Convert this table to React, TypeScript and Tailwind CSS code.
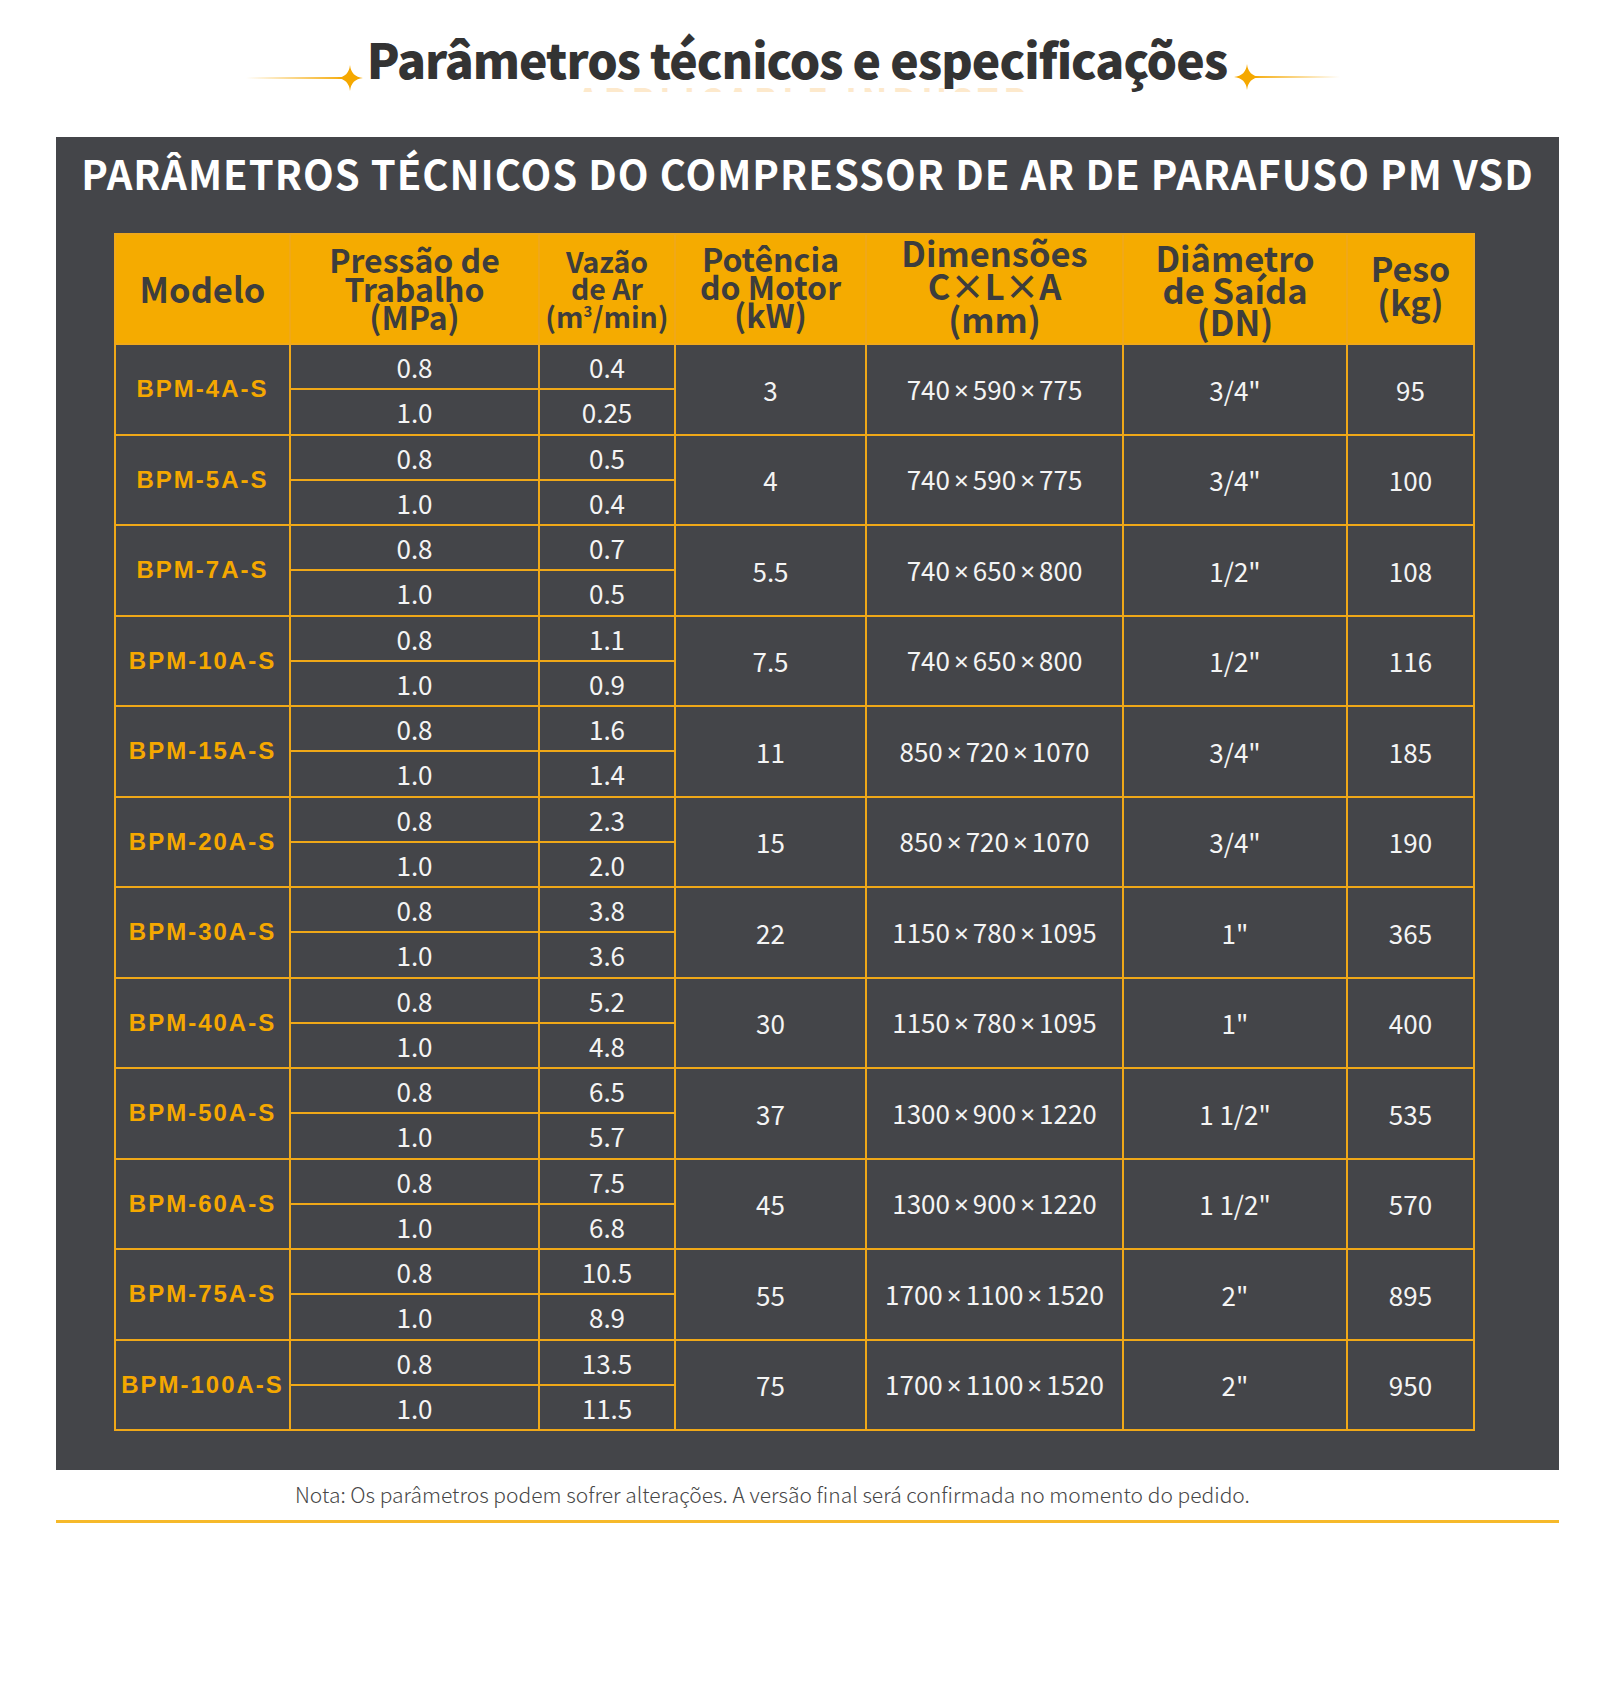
import React from "react";

const rows = [
  ["BPM-4A-S", "0.4", "0.25", "3", "740×590×775", '3/4"', "95"],
  ["BPM-5A-S", "0.5", "0.4", "4", "740×590×775", '3/4"', "100"],
  ["BPM-7A-S", "0.7", "0.5", "5.5", "740×650×800", '1/2"', "108"],
  ["BPM-10A-S", "1.1", "0.9", "7.5", "740×650×800", '1/2"', "116"],
  ["BPM-15A-S", "1.6", "1.4", "11", "850×720×1070", '3/4"', "185"],
  ["BPM-20A-S", "2.3", "2.0", "15", "850×720×1070", '3/4"', "190"],
  ["BPM-30A-S", "3.8", "3.6", "22", "1150×780×1095", '1"', "365"],
  ["BPM-40A-S", "5.2", "4.8", "30", "1150×780×1095", '1"', "400"],
  ["BPM-50A-S", "6.5", "5.7", "37", "1300×900×1220", '1 1/2"', "535"],
  ["BPM-60A-S", "7.5", "6.8", "45", "1300×900×1220", '1 1/2"', "570"],
  ["BPM-75A-S", "10.5", "8.9", "55", "1700×1100×1520", '2"', "895"],
  ["BPM-100A-S", "13.5", "11.5", "75", "1700×1100×1520", '2"', "950"],
];

const Star = () => (
  <svg width="26" height="26" viewBox="0 0 26 26" className="shrink-0">
    <path d="M13 0 Q14.2 11.8 26 13 Q14.2 14.2 13 26 Q11.8 14.2 0 13 Q11.8 11.8 13 0Z" fill="#f5a800" />
  </svg>
);

const cjk = { fontFamily: '"Noto Sans CJK SC", "Noto Sans", sans-serif' };

const Dims = ({ v }: { v: string }) => {
  const parts = v.split("×");
  return (
    <span>
      {parts.map((p, i) => (
        <React.Fragment key={i}>
          {i > 0 && (
            <span className="px-[4px]" style={{ fontFamily: '"Noto Sans", sans-serif' }}>
              ×
            </span>
          )}
          {p}
        </React.Fragment>
      ))}
    </span>
  );
};

export default function App() {
  const hdr = "bg-[#f5ab00] flex items-center justify-center text-center text-[#3d3d3d] font-bold";
  const cell = "bg-[#444549] flex items-center justify-center text-[#f4f4f4] text-[26px]";
  return (
    <div className="w-[1600px] h-[1696px] bg-white" style={cjk}>
      {/* Title */}
      <div className="h-[137px] relative">
        <div className="w-[1586px] flex justify-center items-start pt-[28px]">
          <div className="w-[103px] h-[2px] mt-[49px] bg-gradient-to-r from-[#f5a80000] to-[#f5a800]" />
          <div className="mt-[37px] -ml-[12px]"><Star /></div>
          <div className="ml-[4px] text-[48px] leading-[60px] font-black text-[#333333] tracking-[-1px] relative z-10">
            Parâmetros técnicos e especificações
          </div>
          <div className="mt-[36px] ml-[7px]"><Star /></div>
          <div className="w-[92px] h-[2px] mt-[48px] -ml-[12px] bg-gradient-to-r from-[#f5a800] to-[#f5a80000]" />
        </div>
        <div className="absolute left-[577px] top-[82px] w-[452px] h-[10px] overflow-hidden">
          <div className="text-[34px] leading-[34px] font-bold tracking-[5px] text-[#fde9cc] whitespace-nowrap">
            APPLICABLE INDUSTRIES
          </div>
        </div>
      </div>

      {/* Panel */}
      <div className="ml-[56px] w-[1503px] h-[1333px] bg-[#444549] pt-[12px]">
        <div className="h-[48px] flex items-center justify-center text-white font-bold text-[40px] leading-[48px] tracking-[1px]">
          PARÂMETROS TÉCNICOS DO COMPRESSOR DE AR DE PARAFUSO PM VSD
        </div>
        <div className="mt-[36px] ml-[58px] w-[1361px] grid bg-[#f0a818] p-[2px] gap-[2px] grid-cols-[173px_247px_134px_189px_255px_222px_125px] grid-rows-[108px_repeat(24,43.25px)]">
          <div className={hdr + " text-[34.5px]"}>Modelo</div>
          <div className={hdr + " text-[32px] leading-[28.5px] pb-[2px]"}>
            <span>Pressão de<br />Trabalho<br />(MPa)</span>
          </div>
          <div className={hdr + " leading-[27.5px] text-[28.5px] pb-[2px]"}>
            <span>
              Vazão<br />de Ar<br />(m<sup className="text-[15px] -top-[11px] relative align-baseline">3</sup>/min)
            </span>
          </div>
          <div className={hdr + " text-[32px] leading-[28px] pb-[6px]"}>
            <span>Potência<br />do Motor<br />(kW)</span>
          </div>
          <div className={hdr + " text-[34.5px] leading-[33px] pb-[8px]"}>
            <span>Dimensões<br />C×L×A<br />(mm)</span>
          </div>
          <div className={hdr + " text-[34.5px] leading-[32px]"}>
            <span>Diâmetro<br />de Saída<br />(DN)</span>
          </div>
          <div className={hdr + " text-[34px] leading-[34px] pb-[8px]"}>
            <span>Peso<br />(kg)</span>
          </div>
          {rows.map((r) => (
            <React.Fragment key={r[0]}>
              <div
                className="row-span-2 bg-[#444549] flex items-center justify-center text-[#f5a800] text-[24px] font-bold tracking-[2px] whitespace-nowrap"
                style={{ fontFamily: '"Liberation Sans", Arial, sans-serif' }}
              >
                {r[0]}
              </div>
              <div className={cell}>0.8</div>
              <div className={cell}>{r[1]}</div>
              <div className={cell + " row-span-2"}>{r[3]}</div>
              <div className={cell + " row-span-2"}>
                <Dims v={r[4]} />
              </div>
              <div className={cell + " row-span-2"}>{r[5]}</div>
              <div className={cell + " row-span-2"}>{r[6]}</div>
              <div className={cell}>1.0</div>
              <div className={cell}>{r[2]}</div>
            </React.Fragment>
          ))}
        </div>
      </div>

      {/* Note */}
      <div className="h-[50px] pl-[295px] flex items-center text-[21px] font-light text-[#474747]">
        Nota: Os parâmetros podem sofrer alterações. A versão final será confirmada no momento do pedido.
      </div>
      <div className="ml-[56px] w-[1503px] h-[3px] bg-[#f6b92a]" />
    </div>
  );
}
